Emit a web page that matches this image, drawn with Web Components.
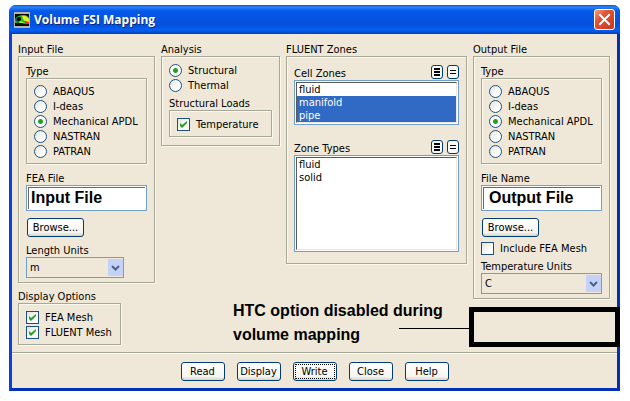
<!DOCTYPE html>
<html lang="en">
<head>
<meta charset="utf-8">
<title>Volume FSI Mapping</title>
<style>
    :root {
        --face: #efe8d8;
        --line: #a6a898;
        --edge: #1c5180;
        --field: #6f9fcf;
        --note: bold 16px/24px "Liberation Sans Narrow", "Liberation Sans", sans-serif;
    }

    body {
        margin: 0;
        padding: 5px 10px 10px 9px;
        background: #fff;
        color: #000;
        font: 11px/13px "DejaVu Sans Condensed", "Noto Sans", sans-serif;
    }

    main {
        position: relative;
    }

    .columns {
        display: grid;
        grid-template-columns: 137fr 119fr 181fr 137fr;
        gap: 6px;
        align-items: start;
        padding: 9px 7px 7px 6px;
    }

    .gap-s { margin-top: 4px; }
    .gap { margin-top: 7px; }
    .gap-l { margin-top: 8px; }
    .narrow { width: 98px; }
    .options { width: 103px; }
    .zones { padding-bottom: 7px; }
    .loads { padding-bottom: 4px; }

    fsi-callout {
        position: absolute;
        right: 0;
        bottom: 44px;
    }
</style>
</head>
<body>
<main>
    <fsi-window heading="Volume FSI Mapping">
        <div class="columns">
            <div>
                <fsi-group label="Input File">
                    <fsi-group label="Type" tight>
                        <fsi-radios options="ABAQUS,I-deas,Mechanical APDL,NASTRAN,PATRAN" value="Mechanical APDL"></fsi-radios>
                    </fsi-group>
                    <fsi-field class="gap-l" label="FEA File" value="Input File"></fsi-field>
                    <fsi-button class="gap" wide>Browse...</fsi-button>
                    <fsi-select class="gap narrow" label="Length Units" value="m"></fsi-select>
                </fsi-group>
                <fsi-group class="gap options" label="Display Options">
                    <fsi-check label="FEA Mesh" checked></fsi-check>
                    <fsi-check label="FLUENT Mesh" checked></fsi-check>
                </fsi-group>
            </div>
            <fsi-group label="Analysis">
                <div class="loads">
                    <fsi-radios options="Structural,Thermal" value="Structural"></fsi-radios>
                    <fsi-group class="gap-s" label="Structural Loads">
                        <fsi-check label="Temperature" checked></fsi-check>
                    </fsi-group>
                </div>
            </fsi-group>
            <fsi-group label="FLUENT Zones">
                <div class="zones">
                    <fsi-list label="Cell Zones" options="fluid,manifold,pipe" selected="manifold,pipe" rows="3"></fsi-list>
                    <fsi-list class="list-gap" label="Zone Types" options="fluid,solid" rows="7"></fsi-list>
                </div>
            </fsi-group>
            <fsi-group label="Output File">
                <fsi-group label="Type" tight>
                    <fsi-radios options="ABAQUS,I-deas,Mechanical APDL,NASTRAN,PATRAN" value="Mechanical APDL"></fsi-radios>
                </fsi-group>
                <fsi-field class="gap-l" label="File Name" value="Output File" indent></fsi-field>
                <fsi-button class="gap" wide>Browse...</fsi-button>
                <fsi-check class="gap-s" label="Include FEA Mesh"></fsi-check>
                <fsi-select class="gap-s" label="Temperature Units" value="C"></fsi-select>
            </fsi-group>
        </div>
        <fsi-button slot="actions">Read</fsi-button>
        <fsi-button slot="actions">Display</fsi-button>
        <fsi-button slot="actions" default>Write</fsi-button>
        <fsi-button slot="actions">Close</fsi-button>
        <fsi-button slot="actions">Help</fsi-button>
    </fsi-window>
    <fsi-callout>HTC option disabled during<br>volume mapping</fsi-callout>
</main>

<script>
class FsiElement extends HTMLElement {
    constructor() {
        super();
        this.attachShadow({ mode: "open" });
    }

    connectedCallback() {
        this.shadowRoot.innerHTML = `
            <style>
                * { box-sizing: border-box; }
                :host { display: block; }
                input, select, button { margin: 0; font: inherit; color: inherit; }
            </style>
            ${this.render()}
        `;
    }

    attr(name) {
        return this.getAttribute(name) || "";
    }

    list(name) {
        return this.attr(name).split(",").filter(Boolean);
    }
}

class FsiWindow extends FsiElement {
    render() {
        return `
            <style>
                .window {
                    background: var(--face);
                    border: 3px solid #0a3fe0;
                    border-top: 0;
                    border-right-color: #0230b8;
                    border-bottom-color: #0230b8;
                    border-radius: 7px 7px 0 0;
                }
                header {
                    display: flex;
                    align-items: center;
                    gap: 4px;
                    height: 29px;
                    margin: 0 -3px;
                    padding: 0 5px;
                    border-radius: 7px 7px 0 0;
                    background: linear-gradient(#0a50c8 0, #2a86f8 2px, #0558e8 6px, #0450dc 20px, #0560f4 25px, #0340b8 29px);
                }
                h1 {
                    flex: 1;
                    margin: 0;
                    color: #fff;
                    font: bold 12px/18px "Open Sans", "Noto Sans", sans-serif;
                    text-shadow: 1px 1px 0 #0a2a80;
                }
                svg { display: block; }
                header button {
                    width: 21px;
                    height: 21px;
                    padding: 0;
                    border: 1px solid #fff;
                    border-radius: 3px;
                    background: linear-gradient(135deg, #f0a080 0, #e25434 35%, #c8381c 100%);
                }
                footer {
                    display: flex;
                    justify-content: center;
                    gap: 12px;
                    padding: 9px 0 7px;
                    border-top: 1px solid var(--line);
                    box-shadow: inset 0 1px 0 #fffdf4;
                }
            </style>
            <div class="window">
                <header>
                    <svg width="16" height="16" viewBox="0 0 16 16">
                        <rect width="16" height="16" fill="#b8b4a0"/>
                        <rect x="1" y="2" width="14" height="12" fill="#080808"/>
                        <path d="M1 7C3 4 6 3 9 3c4 0 6 2 6 4v4c-2 2-5 1-7 0S3 11 1 11z" fill="#18c038"/>
                        <path d="M8 4c3-1 6 1 7 3v4c-3-1-5-2-6-4z" fill="#f0e820"/>
                        <path d="M11 9c2 0 3 1 4 1v2h-4z" fill="#f03018"/>
                        <path d="M1 8c1-3 4-4 6-3l-1 4-3 1z" fill="#105848"/>
                        <circle cx="5" cy="7" r="2" fill="#080808"/>
                        <path d="M6 9c2 0 3 1 4 2H5z" fill="#a0f020"/>
                    </svg>
                    <h1>${this.attr("heading")}</h1>
                    <button type="button" aria-label="Close window">
                        <svg width="19" height="19" viewBox="0 0 19 19">
                            <path d="M5 5l9 9M14 5l-9 9" stroke="#fff" stroke-width="2" stroke-linecap="square"/>
                        </svg>
                    </button>
                </header>
                <slot></slot>
                <footer><slot name="actions"></slot></footer>
            </div>
        `;
    }
}

class FsiGroup extends FsiElement {
    render() {
        return `
            <style>
                .box {
                    padding: 6px 7px 4px;
                    border: 1px solid var(--line);
                    box-shadow: 1px 1px 0 #fbf8ec, inset 1px 1px 0 #fbf8ec;
                }
                :host([tight]) .box { padding-top: 5px; }
                /* a caption as first child needs a little more air than a row of controls */
                .box.captioned { padding-top: 8px; }
            </style>
            <div role="group" aria-labelledby="caption">
                <div id="caption">${this.attr("label")}</div>
                <div class="box ${this.querySelector(":scope > fsi-group") ? "captioned" : ""}"><slot></slot></div>
            </div>
        `;
    }
}

class FsiRadios extends FsiElement {
    render() {
        return `
            <style>
                label {
                    display: flex;
                    align-items: center;
                    gap: 6px;
                    height: 15px;
                    white-space: nowrap;
                }
                input {
                    appearance: none;
                    flex: none;
                    width: 13px;
                    height: 13px;
                    border: 1px solid var(--edge);
                    border-radius: 50%;
                    background: linear-gradient(135deg, #e4e2da, #fff 70%);
                }
                input:checked {
                    background: radial-gradient(circle, #21a121 2px, #fff 3px);
                }
            </style>
            ${this.list("options").map((name) => `
                <label>
                    <input type="radio" name="choice" ${name === this.attr("value") ? "checked" : ""}>
                    <span>${name}</span>
                </label>`).join("")}
        `;
    }
}

class FsiCheck extends FsiElement {
    render() {
        return `
            <style>
                label {
                    display: grid;
                    grid-template-columns: 13px 1fr;
                    align-items: center;
                    column-gap: 6px;
                    height: 15px;
                    white-space: nowrap;
                }
                input {
                    appearance: none;
                    grid-area: 1 / 1;
                    width: 13px;
                    height: 13px;
                    border: 1px solid var(--edge);
                    background: linear-gradient(135deg, #e4e2da, #fff 70%);
                }
                svg { grid-area: 1 / 1; display: none; pointer-events: none; }
                input:checked + svg { display: block; }
            </style>
            <label>
                <input type="checkbox" ${this.hasAttribute("checked") ? "checked" : ""}>
                <svg width="13" height="13" viewBox="0 0 13 13">
                    <path d="M3 5v3l2 2 5-5V3L5 7z" fill="#21a121"/>
                </svg>
                <span>${this.attr("label")}</span>
            </label>
        `;
    }
}

class FsiField extends FsiElement {
    render() {
        return `
            <style>
                label, input { display: block; }
                input {
                    width: 100%;
                    height: 26px;
                    padding: 0 4px;
                    border: 1px solid var(--field);
                    background: #fff;
                    box-shadow: inset 0 0 0 1px #fff, inset 2px 2px 0 #6c6a60;
                    font: var(--note);
                }
                :host([indent]) input { padding-left: 7px; }
            </style>
            <label>${this.attr("label")}<input type="text" value="${this.attr("value")}"></label>
        `;
    }
}

class FsiSelect extends FsiElement {
    render() {
        return `
            <style>
                label { display: grid; }
                select {
                    grid-area: 2 / 1;
                    appearance: none;
                    width: 100%;
                    height: 21px;
                    padding: 0 18px 0 3px;
                    border: 1px solid var(--field);
                    border-radius: 0;
                    background: var(--face);
                }
                svg {
                    grid-area: 2 / 1;
                    justify-self: end;
                    align-self: center;
                    margin-right: 1px;
                    pointer-events: none;
                }
            </style>
            <label>
                <span>${this.attr("label")}</span>
                <select><option>${this.attr("value")}</option></select>
                <svg width="15" height="17" viewBox="0 0 15 17">
                    <rect width="15" height="17" rx="1" fill="#c4d2fa"/>
                    <path d="M4 7l3.500 3.500L11 7" fill="none" stroke="#4d6185" stroke-width="2"/>
                </svg>
            </label>
        `;
    }
}

class FsiList extends FsiElement {
    render() {
        const selected = this.list("selected");
        return `
            <style>
                :host(.list-gap) { margin-top: 13px; }
                .head {
                    display: flex;
                    align-items: center;
                    gap: 4px;
                    height: 17px;
                }
                label { flex: 1; padding-top: 3px; }
                button {
                    width: 12px;
                    height: 14px;
                    padding: 0;
                    border: 1px solid #003c74;
                    border-radius: 3px;
                    background: #fbfaf6;
                }
                button svg { display: block; margin: auto; }
                .frame {
                    padding: 1px;
                    border: 1px solid var(--field);
                    background: #fff;
                }
                select {
                    display: block;
                    width: 100%;
                    height: ${Number(this.attr("rows")) * 13 + 2}px;
                    padding: 0;
                    border: 1px solid;
                    border-color: #5c5a54 #ece8d4 #ece8d4 #5c5a54;
                    border-radius: 0;
                    background: #fff;
                    overflow: hidden;
                    outline: 0;
                }
                option {
                    height: 13px;
                    min-height: 13px;
                    padding: 0 2px;
                    line-height: 13px;
                }
                option:checked {
                    background: #316ac5 linear-gradient(#316ac5, #316ac5);
                    color: #fff;
                }
            </style>
            <div class="head">
                <label for="items">${this.attr("label")}</label>
                <button type="button" aria-label="Select all">
                    <svg width="10" height="12" viewBox="0 0 10 12"><path d="M2 2h6v2H2zM2 5h6v2H2zM2 8h6v2H2z"/></svg>
                </button>
                <button type="button" aria-label="Deselect all">
                    <svg width="10" height="12" viewBox="0 0 10 12"><path d="M2 4h6v1H2zM2 7h6v1H2z"/></svg>
                </button>
            </div>
            <div class="frame">
                <select id="items" multiple size="${this.attr("rows")}">
                    ${this.list("options").map((name) => `<option ${selected.includes(name) ? "selected" : ""}>${name}</option>`).join("")}
                </select>
            </div>
        `;
    }
}

class FsiButton extends FsiElement {
    render() {
        return `
            <style>
                button {
                    display: block;
                    width: 44px;
                    height: 19px;
                    padding: 0;
                    border: 1px solid #003c74;
                    border-radius: 3px;
                    background: linear-gradient(#fff, #f6f4ee 80%, #d8d2c4);
                    text-align: center;
                    white-space: nowrap;
                }
                :host([wide]) button { width: 57px; margin-left: 1px; }
                :host([default]) button { outline: 1px dotted #000; outline-offset: -3px; }
            </style>
            <button type="button"><slot></slot></button>
        `;
    }
}

class FsiCallout extends FsiElement {
    render() {
        return `
            <style>
                :host { display: flex; align-items: flex-end; pointer-events: none; }
                /* the leader runs in under the end of the first line */
                .text { width: 166px; font: var(--note); white-space: nowrap; }
                .leader { width: 70px; height: 19px; border-top: 1px solid #000; }
                .target { width: 151px; height: 40px; border: 5px solid #000; }
            </style>
            <div class="text"><slot></slot></div>
            <div class="leader"></div>
            <div class="target"></div>
        `;
    }
}

customElements.define("fsi-window", FsiWindow);
customElements.define("fsi-group", FsiGroup);
customElements.define("fsi-radios", FsiRadios);
customElements.define("fsi-check", FsiCheck);
customElements.define("fsi-field", FsiField);
customElements.define("fsi-select", FsiSelect);
customElements.define("fsi-list", FsiList);
customElements.define("fsi-button", FsiButton);
customElements.define("fsi-callout", FsiCallout);
</script>
</body>
</html>
